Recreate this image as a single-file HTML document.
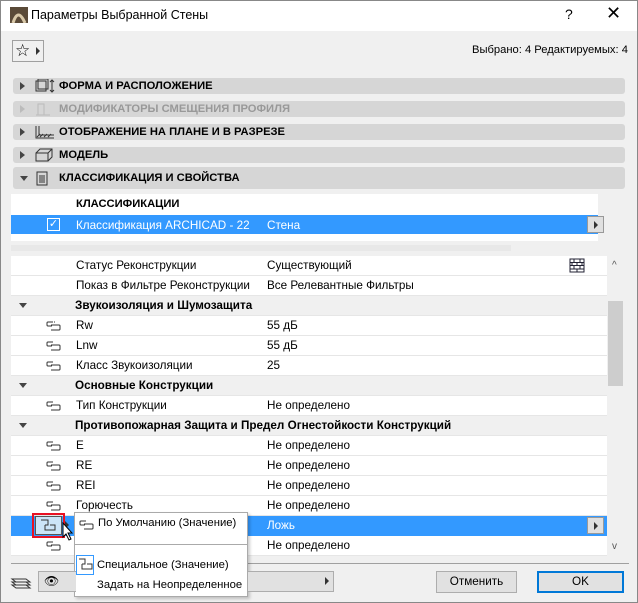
<!DOCTYPE html>
<html><head><meta charset="utf-8"><style>
*{box-sizing:border-box;margin:0;padding:0}
body{width:638px;height:603px;background:#f0f0f0;font-family:"Liberation Sans",sans-serif;font-size:11.7px;color:#000;position:relative;overflow:hidden}
.a{position:absolute}
.frame{left:0;top:0;width:638px;height:603px;border:1px solid #888}
.title{left:1px;top:1px;width:636px;height:30px;background:#fff}
.bar{left:13px;width:612px;height:16px;background:#d6d6d6;border-radius:3px;font-weight:bold;font-size:11.2px}
.bar span{position:absolute;left:46px;top:2px}
.tri{position:absolute;left:7px;top:4px;width:0;height:0;border-left:5px solid #444;border-top:4px solid transparent;border-bottom:4px solid transparent}
.trid{position:absolute;width:0;height:0;border-top:5px solid #444;border-left:4px solid transparent;border-right:4px solid transparent}
.row{left:11px;width:596px;height:20px;background:#fff;border-bottom:1px solid #e6e6e6}
.row .n{position:absolute;left:65px;top:3px}
.row .v{position:absolute;left:256px;top:3px}
.grp{background:#f0f0f0;font-weight:bold}
.lk{position:absolute;left:35px;top:5px;width:15px;height:10px}
</style></head><body>
<div class="a frame"></div>
<div class="a title"></div>
<svg class="a" style="left:10px;top:7px" width="18" height="16"><rect width="18" height="16" fill="#5a4a38"/><path d="M3 16 Q8 0 15 16" stroke="#d8c8a8" stroke-width="3" fill="none"/></svg>
<div class="a" style="left:31px;top:8px;font-size:12.5px">Параметры Выбранной Стены</div>
<div class="a" style="left:565px;top:6px;font-size:14px">?</div>
<div class="a" style="left:606px;top:3px;font-size:18px;font-weight:normal">✕</div>
<div class="a" style="left:12px;top:40px;width:32px;height:22px;border:1px solid #a0a0a0;background:#f0f0f0"></div>
<div class="a" style="left:15px;top:41px;font-size:17px">☆</div>
<div class="a" style="left:36px;top:47px;border-left:4px solid #333;border-top:4px solid transparent;border-bottom:4px solid transparent"></div>
<div class="a" style="left:472px;top:44px;font-size:11.2px">Выбрано: 4 Редактируемых: 4</div>

<div class="a bar" style="top:78px"><i class="tri"></i><svg class="a" style="left:21px;top:1px" width="22" height="14"><rect x="2" y="2" width="10" height="10" fill="none" stroke="#333"/><rect x="4" y="0" width="10" height="10" fill="none" stroke="#333"/><path d="M18 1v12M16 3l2-2 2 2M16 11l2 2 2-2" stroke="#333" fill="none"/></svg><span>ФОРМА И РАСПОЛОЖЕНИЕ</span></div>
<div class="a bar" style="top:101px;color:#999"><i class="tri" style="border-left-color:#bbb"></i><svg class="a" style="left:21px;top:1px" width="22" height="14"><path d="M4 13V2h6v11M2 13h14" stroke="#bbb" fill="none"/></svg><span>МОДИФИКАТОРЫ СМЕЩЕНИЯ ПРОФИЛЯ</span></div>
<div class="a bar" style="top:124px"><i class="tri"></i><svg class="a" style="left:21px;top:1px" width="22" height="14"><path d="M2 1v12h18M5 1v9h15" stroke="#333" fill="none"/><path d="M3 12l3-3M6 12l3-3M10 12l3-3M14 12l3-3" stroke="#333"/></svg><span>ОТОБРАЖЕНИЕ НА ПЛАНЕ И В РАЗРЕЗЕ</span></div>
<div class="a bar" style="top:147px"><i class="tri"></i><svg class="a" style="left:21px;top:0px" width="22" height="15"><path d="M2 6h12v8H2zM2 6l4-4h12v8l-4 4M14 6l4-4" stroke="#333" fill="none"/></svg><span>МОДЕЛЬ</span></div>
<div class="a bar" style="top:167px;height:22px"><i class="trid" style="left:7px;top:9px"></i><svg class="a" style="left:23px;top:4px" width="14" height="15"><rect x="1" y="1" width="10" height="13" fill="none" stroke="#333"/><path d="M3 5h6M3 7h6M3 9h6M3 11h6" stroke="#333"/></svg><span style="top:5px">КЛАССИФИКАЦИЯ И СВОЙСТВА</span></div>

<div class="a" style="left:11px;top:194px;width:587px;height:47px;background:#fff"></div>
<div class="a" style="left:76px;top:198px;font-weight:bold;font-size:11.2px">КЛАССИФИКАЦИИ</div>
<div class="a" style="left:11px;top:215px;width:587px;height:19px;background:#3399ff;color:#fff"></div>
<div class="a" style="left:47px;top:218px;width:13px;height:13px;border:1px solid #fff;color:#fff;font-size:11px;line-height:11px;text-align:center">✓</div>
<div class="a" style="left:76px;top:219px;color:#fff">Классификация ARCHICAD - 22</div>
<div class="a" style="left:267px;top:219px;color:#fff">Стена</div>
<div class="a" style="left:587px;top:216px;width:17px;height:17px;background:#e0e0e0;border:1px solid #999"></div>
<div class="a" style="left:594px;top:221px;border-left:4px solid #333;border-top:4px solid transparent;border-bottom:4px solid transparent"></div>
<div class="a" style="left:11px;top:245px;width:500px;height:6px;background:#e8e8e8"></div>

<div class="a row" style="top:256px"><span class="n">Статус Реконструкции</span><span class="v">Существующий</span>
<svg class="a" style="left:558px;top:2px" width="16" height="15"><path d="M1 1h14v13H1zM1 4.5h14M1 7.5h14M1 11h14M5 1v3.5M11 1v3.5M3 4.5v3M8 4.5v3M13 4.5v3M5 7.5v3.5M11 7.5v3.5M8 11v3" stroke="#223" fill="none"/></svg></div>
<div class="a row" style="top:276px"><span class="n">Показ в Фильтре Реконструкции</span><span class="v">Все Релевантные Фильтры</span></div>
<div class="a row grp" style="top:296px"><i class="trid" style="left:8px;top:7px"></i><span class="n" style="left:64px">Звукоизоляция и Шумозащита</span></div>
<div class="a row" style="top:316px"><svg class="lk" viewBox="0 0 15 10"><path d="M7 1H2a1 1 0 0 0-1 1v2a1 1 0 0 0 1 1h4M5 4h8a1 1 0 0 1 1 1v3a1 1 0 0 1-1 1H5M8 1h1" stroke="#333" fill="none"/></svg><span class="n">Rw</span><span class="v">55 дБ</span></div>
<div class="a row" style="top:336px"><svg class="lk" viewBox="0 0 15 10"><path d="M7 1H2a1 1 0 0 0-1 1v2a1 1 0 0 0 1 1h4M5 4h8a1 1 0 0 1 1 1v3a1 1 0 0 1-1 1H5" stroke="#333" fill="none"/></svg><span class="n">Lnw</span><span class="v">55 дБ</span></div>
<div class="a row" style="top:356px"><svg class="lk" viewBox="0 0 15 10"><path d="M7 1H2a1 1 0 0 0-1 1v2a1 1 0 0 0 1 1h4M5 4h8a1 1 0 0 1 1 1v3a1 1 0 0 1-1 1H5" stroke="#333" fill="none"/></svg><span class="n">Класс Звукоизоляции</span><span class="v">25</span></div>
<div class="a row grp" style="top:376px"><i class="trid" style="left:8px;top:7px"></i><span class="n" style="left:64px">Основные Конструкции</span></div>
<div class="a row" style="top:396px"><svg class="lk" viewBox="0 0 15 10"><path d="M7 1H2a1 1 0 0 0-1 1v2a1 1 0 0 0 1 1h4M5 4h8a1 1 0 0 1 1 1v3a1 1 0 0 1-1 1H5" stroke="#333" fill="none"/></svg><span class="n">Тип Конструкции</span><span class="v">Не определено</span></div>
<div class="a row grp" style="top:416px"><i class="trid" style="left:8px;top:7px"></i><span class="n" style="left:64px">Противопожарная Защита и Предел Огнестойкости Конструкций</span></div>
<div class="a row" style="top:436px"><svg class="lk" viewBox="0 0 15 10"><path d="M7 1H2a1 1 0 0 0-1 1v2a1 1 0 0 0 1 1h4M5 4h8a1 1 0 0 1 1 1v3a1 1 0 0 1-1 1H5" stroke="#333" fill="none"/></svg><span class="n">E</span><span class="v">Не определено</span></div>
<div class="a row" style="top:456px"><svg class="lk" viewBox="0 0 15 10"><path d="M7 1H2a1 1 0 0 0-1 1v2a1 1 0 0 0 1 1h4M5 4h8a1 1 0 0 1 1 1v3a1 1 0 0 1-1 1H5" stroke="#333" fill="none"/></svg><span class="n">RE</span><span class="v">Не определено</span></div>
<div class="a row" style="top:476px"><svg class="lk" viewBox="0 0 15 10"><path d="M7 1H2a1 1 0 0 0-1 1v2a1 1 0 0 0 1 1h4M5 4h8a1 1 0 0 1 1 1v3a1 1 0 0 1-1 1H5" stroke="#333" fill="none"/></svg><span class="n">REI</span><span class="v">Не определено</span></div>
<div class="a row" style="top:496px"><svg class="lk" viewBox="0 0 15 10"><path d="M7 1H2a1 1 0 0 0-1 1v2a1 1 0 0 0 1 1h4M5 4h8a1 1 0 0 1 1 1v3a1 1 0 0 1-1 1H5" stroke="#333" fill="none"/></svg><span class="n">Горючесть</span><span class="v">Не определено</span></div>
<div class="a row" style="top:516px;background:#3399ff;border:none"><span class="v" style="color:#fff">Ложь</span>
<div class="a" style="left:576px;top:1px;width:17px;height:17px;background:#e0e0e0;border:1px solid #999"></div>
<div class="a" style="left:583px;top:6px;border-left:4px solid #333;border-top:4px solid transparent;border-bottom:4px solid transparent"></div></div>
<div class="a row" style="top:536px"><svg class="lk" viewBox="0 0 15 10"><path d="M7 1H2a1 1 0 0 0-1 1v2a1 1 0 0 0 1 1h4M5 4h8a1 1 0 0 1 1 1v3a1 1 0 0 1-1 1H5" stroke="#333" fill="none"/></svg><span class="n" style="left:190px">ы</span><span class="v">Не определено</span></div>

<div class="a" style="left:607px;top:256px;width:17px;height:300px;background:#f0f0f0"></div>
<div class="a" style="left:608px;top:301px;width:15px;height:85px;background:#cdcdcd"></div>
<div class="a" style="left:612px;top:260px;font-size:10px;color:#555">^</div>
<div class="a" style="left:612px;top:541px;font-size:10px;color:#555">v</div>
<div class="a" style="left:11px;top:563px;width:618px;height:1px;background:#a0a0a0"></div>

<div class="a" style="left:32px;top:513px;width:33px;height:25px;border:2px solid #e81123"></div>
<div class="a" style="left:35px;top:516px;width:27px;height:19px;background:#cce4f7;border:1px solid #555"></div>
<svg class="a" style="left:40px;top:519px" width="16" height="13"><path d="M1 1h7v5H5M5 6v5h10V6h-5" stroke="#333" fill="none"/></svg>
<div class="a" style="left:65px;top:521px;border-left:4px solid #333;border-top:4px solid transparent;border-bottom:4px solid transparent"></div>
<svg class="a" style="left:62px;top:522px" width="14" height="20"><path d="M1 1v14l3-3 3 6 2-1-3-6h4z" fill="#fff" stroke="#000"/></svg>

<div class="a" style="left:74px;top:512px;width:174px;height:85px;background:#fff;border:1px solid #aaa;box-shadow:2px 2px 3px rgba(0,0,0,.2)"></div>
<svg class="lk" style="left:79px;top:520px" viewBox="0 0 15 10"><path d="M7 1H2a1 1 0 0 0-1 1v2a1 1 0 0 0 1 1h4M5 4h8a1 1 0 0 1 1 1v3a1 1 0 0 1-1 1H5" stroke="#333" fill="none"/></svg>
<div class="a" style="left:98px;top:517px;font-size:11.3px">По Умолчанию (Значение)</div>
<div class="a" style="left:75px;top:544px;width:172px;height:1px;background:#aaa"></div>
<div class="a" style="left:76px;top:555px;width:18px;height:20px;border:1px solid #3399ff;background:#fff"></div>
<svg class="a" style="left:78px;top:558px" width="16" height="13"><path d="M1 1h6v5H4M4 6v5h10V6h-5" stroke="#333" fill="none"/></svg>
<div class="a" style="left:97px;top:559px;font-size:11.3px">Специальное (Значение)</div>
<div class="a" style="left:97px;top:579px;font-size:11.3px">Задать на Неопределенное</div>

<svg class="a" style="left:10px;top:573px" width="22" height="18"><path d="M2 6h14l4 3H6zM2 9h14l4 3H6zM2 12h14l4 3H6z" fill="none" stroke="#333"/></svg>
<div class="a" style="left:38px;top:571px;width:38px;height:21px;background:#e1e1e1;border:1px solid #adadad;border-right:none"></div>
<div class="a" style="left:248px;top:571px;width:86px;height:21px;background:#e1e1e1;border:1px solid #adadad;border-left:none"></div>
<div class="a" style="left:44px;top:574px;font-size:12px">👁</div>
<div class="a" style="left:325px;top:577px;border-left:4px solid #333;border-top:4px solid transparent;border-bottom:4px solid transparent"></div>
<div class="a" style="left:436px;top:571px;width:81px;height:22px;background:#e1e1e1;border:1px solid #adadad;text-align:center;line-height:20px">Отменить</div>
<div class="a" style="left:537px;top:571px;width:87px;height:22px;background:#e1e1e1;border:2px solid #0078d7;text-align:center;line-height:18px">OK</div>
</body></html>
